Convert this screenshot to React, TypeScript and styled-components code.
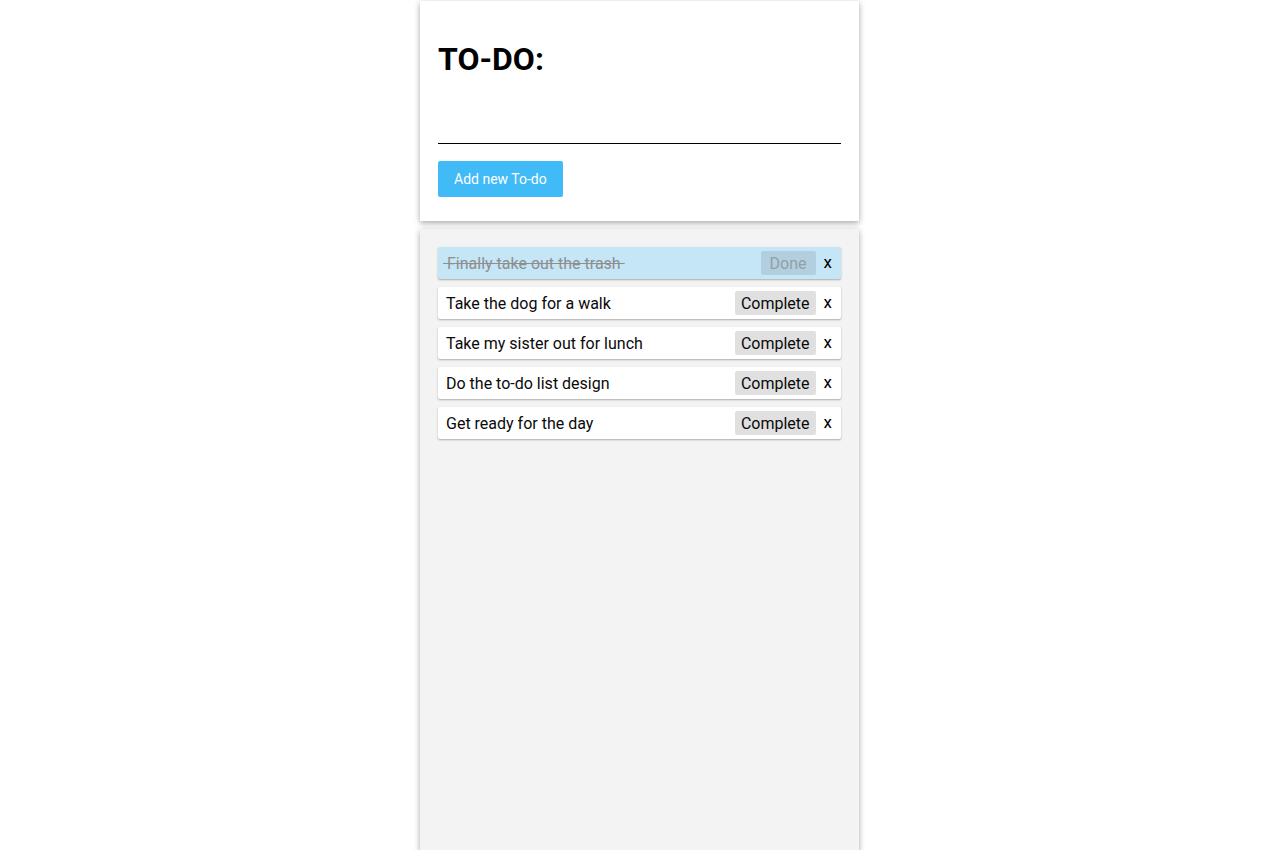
import React from "react";
import styled, { createGlobalStyle } from "styled-components";

const Global = createGlobalStyle`
  html, body { margin: 0; padding: 0; background: #fff; }
  body { font-family: Roboto, "Noto Sans", sans-serif; }
`;

const Page = styled.div`
  width: 439px;
  margin-left: calc(50% - 220px);
  display: flex;
  flex-direction: column;
  gap: 8px;
  padding-top: 1px;
`;

const Card = styled.div<{ $bg: string; $bottom: number }>`
  background: ${(p) => p.$bg};
  box-shadow: 0 2px 6px rgba(0, 0, 0, 0.35);
  padding: 18px 18px ${(p) => p.$bottom}px;
  box-sizing: border-box;
`;

const Title = styled.h1`
  font-size: 32px;
  font-weight: 700;
  margin: 21px 0 0;
  line-height: 38px;
  color: #000;
`;

const Input = styled.input`
  display: block;
  width: 100%;
  box-sizing: border-box;
  border: none;
  border-bottom: 1px solid #000;
  outline: none;
  background: transparent;
  height: 30px;
  margin-top: 36px;
  font-family: Roboto, sans-serif;
  font-size: 16px;
`;

const AddButton = styled.button`
  margin-top: 17px;
  background: #40bbf8;
  color: #fff;
  border: none;
  border-radius: 2px;
  height: 36px;
  padding: 0 16px;
  font-family: Roboto, sans-serif;
  font-size: 14px;
  font-weight: 400;
`;

const List = styled.div`
  display: flex;
  flex-direction: column;
  gap: 8px;
  min-height: 586px;
`;

const Item = styled.div<{ $done?: boolean }>`
  display: flex;
  align-items: center;
  height: 32px;
  padding: 0 9px 0 8px;
  background: ${(p) => (p.$done ? "#c5e6f6" : "#fff")};
  box-shadow: 0 1px 2px rgba(0, 0, 0, 0.3);
  border-radius: 2px;
  font-size: 16px;
`;

const Text = styled.span<{ $done?: boolean }>`
  flex: 1;
  white-space: pre;
  margin-left: ${(p) => (p.$done ? "-3px" : "0")};
  color: ${(p) => (p.$done ? "#8e8e8e" : "#0a0a0a")};
  text-decoration: ${(p) => (p.$done ? "line-through" : "none")};
`;

const StateButton = styled.button<{ $done?: boolean }>`
  height: 24px;
  min-width: 55px;
  padding: 0 6px;
  border: none;
  border-radius: 2px;
  background: ${(p) => (p.$done ? "#b2cfe0" : "#e0e0e0")};
  color: ${(p) => (p.$done ? "#939fa6" : "#0a0a0a")};
  font-family: Roboto, sans-serif;
  font-size: 16px;
`;

const Remove = styled.button`
  border: none;
  background: transparent;
  padding: 0 0 0 8px;
  font-family: Roboto, sans-serif;
  font-size: 17px;
  color: #000;
  margin-top: -3px;
`;

const todos = [
  { text: "Finally take out the trash ", done: true },
  { text: "Take the dog for a walk", done: false },
  { text: "Take my sister out for lunch", done: false },
  { text: "Do the to-do list design", done: false },
  { text: "Get ready for the day", done: false },
];

export default function App() {
  return (
    <>
      <Global />
      <Page>
        <Card $bg="#fff" $bottom={24}>
          <Title>TO-DO:</Title>
          <Input />
          <AddButton>Add new To-do</AddButton>
        </Card>
        <Card $bg="#f3f3f3" $bottom={18}>
          <List>
            {todos.map((t) => (
              <Item key={t.text} $done={t.done}>
                <Text $done={t.done}>{t.done ? " " + t.text : t.text}</Text>
                <StateButton $done={t.done}>{t.done ? "Done" : "Complete"}</StateButton>
                <Remove>x</Remove>
              </Item>
            ))}
          </List>
        </Card>
      </Page>
    </>
  );
}
